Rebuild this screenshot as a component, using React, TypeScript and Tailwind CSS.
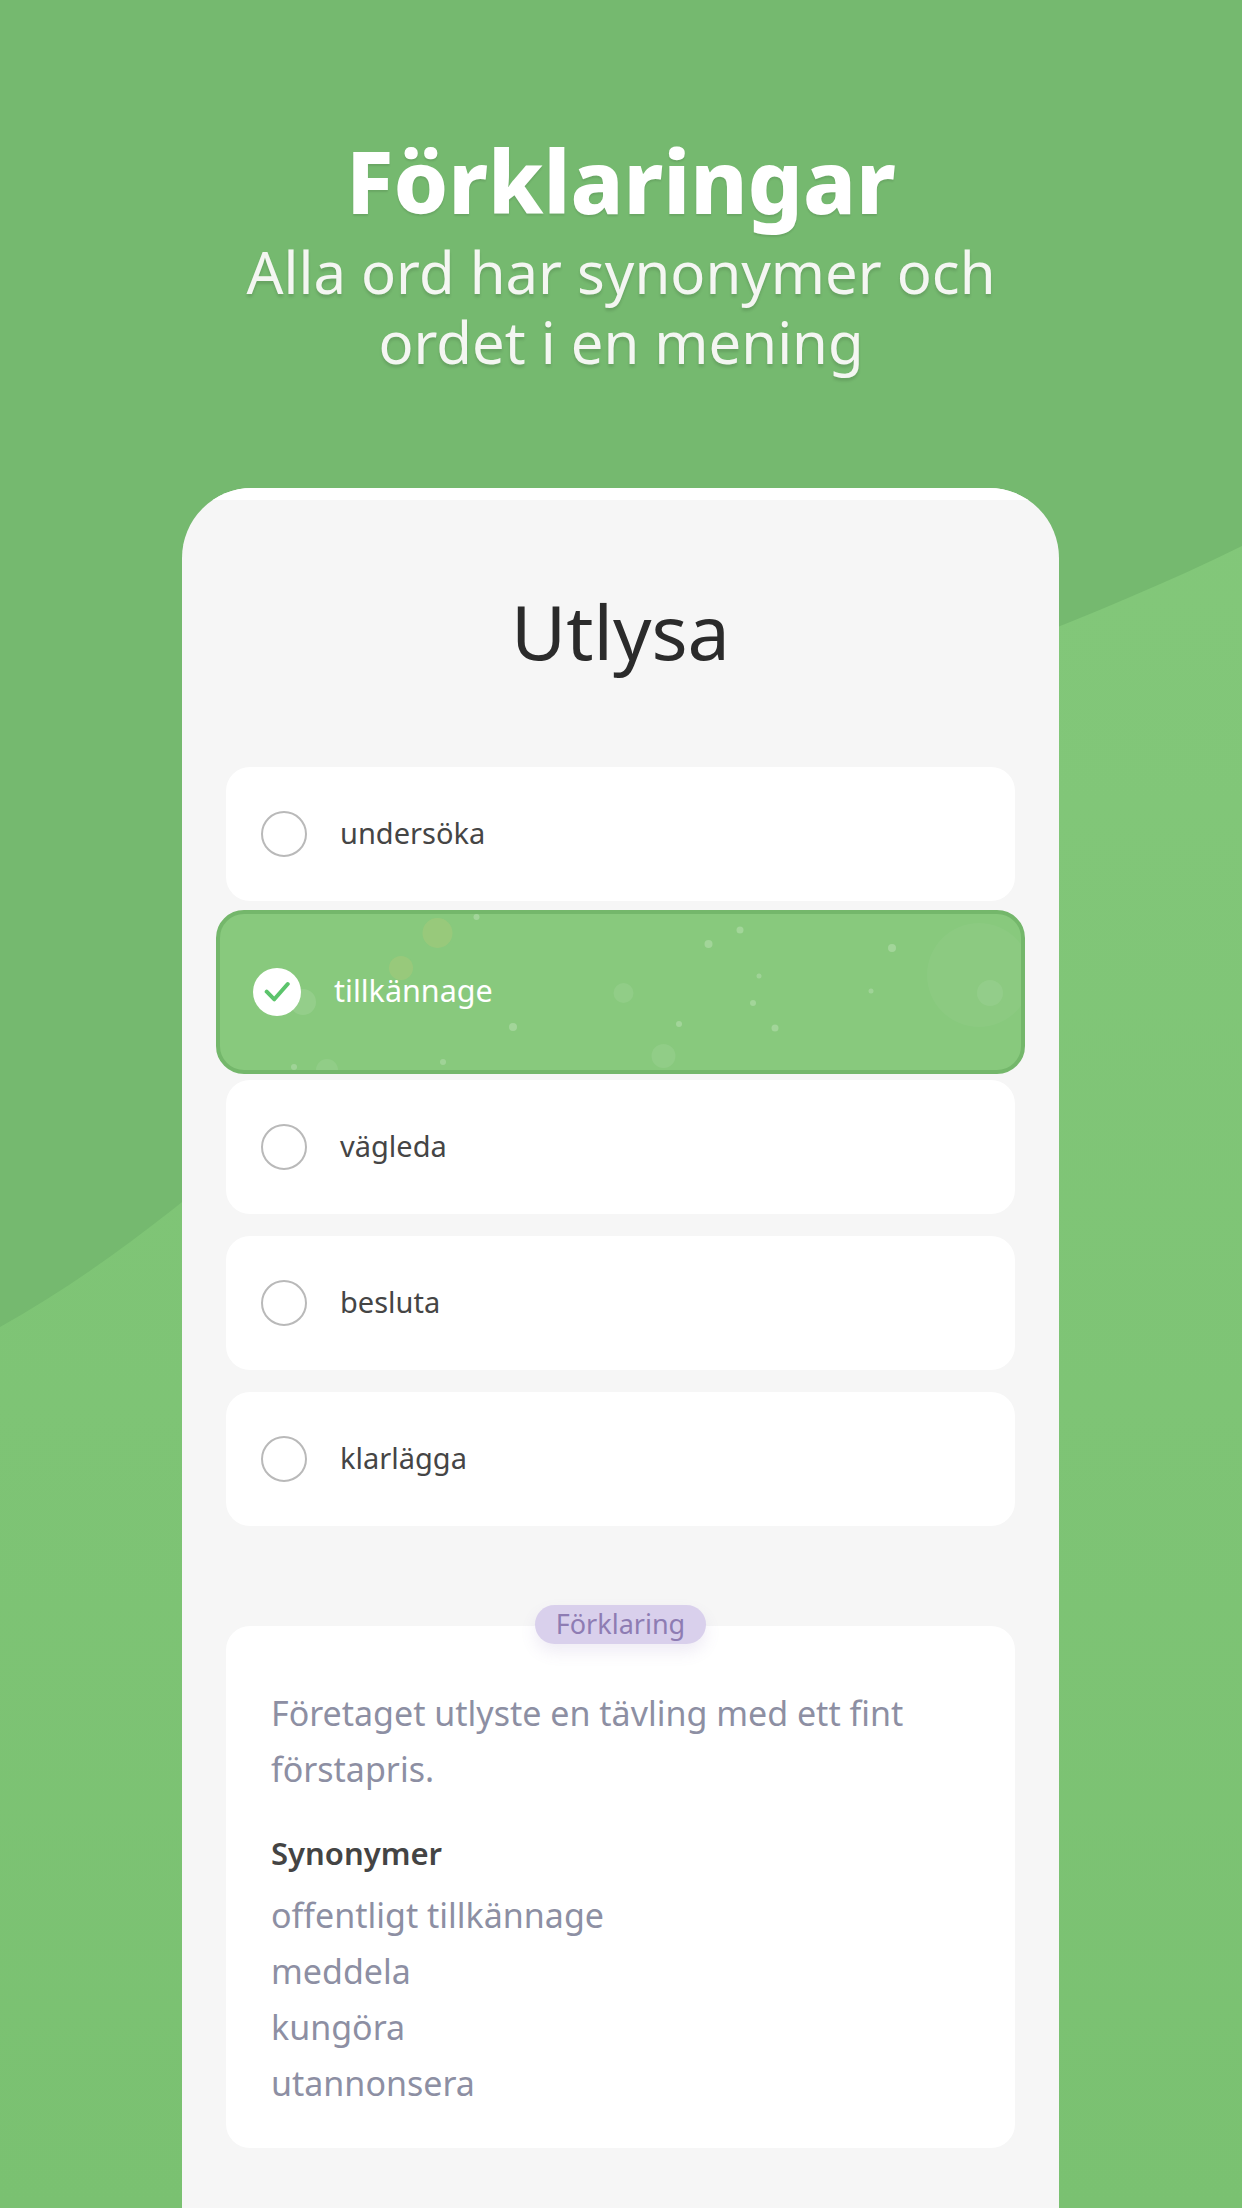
const particles: [number, number, number, number][] = [
  [221.5, 23, 15, 0.0], [260.5, 7, 3, 0.22], [185, 58, 12, 0.0], [87, 92, 13, 0.1],
  [524, 20, 3.5, 0.22], [492.5, 34, 4, 0.22], [676, 38, 4, 0.22], [543, 66, 2.5, 0.2],
  [407.5, 83, 10, 0.08], [655, 81, 2.5, 0.2], [537, 93, 3, 0.22], [297, 117, 4, 0.22],
  [463, 114, 3, 0.22], [559, 118, 3.5, 0.22], [447.5, 146, 12, 0.08], [227, 152, 3, 0.2],
  [78, 157, 3, 0.2], [111, 160, 11, 0.08], [774, 83, 13, 0.07], [763, 65, 52, 0.035],
];

function Option({ label }: { label: string }) {
  return (
    <div className="h-[134px] rounded-[24px] bg-white flex items-center pl-[35px] gap-[33px]">
      <div className="w-[46px] h-[46px] rounded-full border-2 border-[#b9b9b9]" />
      <span className="text-[29px] text-[#454545] -mt-[2px]">{label}</span>
    </div>
  );
}

function Selected() {
  return (
    <div className="relative top-[2px] -mx-[10px] -my-[15px] h-[164px] rounded-[28px] bg-[#88c97d] border-[4px] border-[#74b76b] flex items-center pl-[33px] gap-[33px] overflow-hidden">
      <svg className="absolute -left-[4px] -top-[4px] w-[808px] h-[164px]" viewBox="0 0 808 164">
        {particles.map(([x, y, r, o], i) =>
          o === 0 ? (
            <circle key={i} cx={x} cy={y} r={r} fill="#a3c97a" fillOpacity={0.6} />
          ) : (
            <circle key={i} cx={x} cy={y} r={r} fill="#ffffff" fillOpacity={o} />
          ),
        )}
      </svg>
      <div className="relative w-[48px] h-[48px] rounded-full bg-white flex items-center justify-center">
        <svg width="26" height="26" viewBox="0 0 26 26" fill="none">
          <path d="M2.7 12.7 L10.3 20.3 L23.7 5" stroke="#5cc46c" strokeWidth="4" strokeLinecap="round" strokeLinejoin="round" />
        </svg>
      </div>
      <span className="relative text-[30.5px] text-white -mt-[2px]">tillkännage</span>
    </div>
  );
}

export default function App() {
  return (
    <div className="relative w-[1242px] h-[2208px] overflow-hidden bg-gradient-to-b from-[#85c97c] to-[#7ac171] font-['Noto_Sans','Liberation_Sans',sans-serif]">
      <svg className="absolute inset-0 w-[1242px] h-[2208px]" viewBox="0 0 1242 2208">
        <path d="M0 0 H1242 V546 C1000 665 760 720 560 850 C380 1025 200 1215 0 1327 Z" fill="#75b96f" />
      </svg>
      <div className="relative flex flex-col items-center h-[488px] pt-[135px]">
        <h1 className="text-[87px] leading-[90px] font-extrabold text-white [text-shadow:0_2px_2px_rgba(0,0,0,0.1)]">Förklaringar</h1>
        <p className="mt-[12px] text-[58px] leading-[70px] font-normal text-center text-[#f4f6f2] [text-shadow:0_3px_3px_rgba(0,0,0,0.12)]">
          Alla ord har synonymer och
          <br />
          ordet i en mening
        </p>
      </div>
      <div className="relative ml-[182px] w-[877px] h-[1720px] bg-[#f6f6f6] rounded-t-[70px] overflow-hidden">
        <div className="h-[12px] bg-white" />
        <div className="px-[44px]">
          <h2 className="pt-[86px] text-center text-[75.5px] leading-[90px] text-[#2b2b2b] font-normal">Utlysa</h2>
          <div className="mt-[91px] flex flex-col gap-[22.3px]">
            <Option label="undersöka" />
            <Selected />
            <Option label="vägleda" />
            <Option label="besluta" />
            <Option label="klarlägga" />
          </div>
          <div className="relative mt-[100px] h-[522px] rounded-[24px] bg-white pl-[45px] pt-[59px]">
            <div className="absolute -top-[21px] left-[309px] w-[171px] h-[39px] rounded-full bg-[#d9d0ec] flex items-center justify-center text-[27px] text-[#8e7cb3] shadow-[0_8px_16px_rgba(120,100,170,0.12)]">
              Förklaring
            </div>
            <p className="text-[34px] leading-[56px] text-[#8d8fa3]">
              Företaget utlyste en tävling med ett fint
              <br />
              förstapris.
            </p>
            <p className="mt-[28px] text-[31px] leading-[56px] font-semibold text-[#444444]">Synonymer</p>
            <ul className="mt-[6px] text-[34px] leading-[56px] text-[#8d8fa3]">
              <li>offentligt tillkännage</li>
              <li>meddela</li>
              <li>kungöra</li>
              <li>utannonsera</li>
            </ul>
          </div>
        </div>
      </div>
    </div>
  );
}
